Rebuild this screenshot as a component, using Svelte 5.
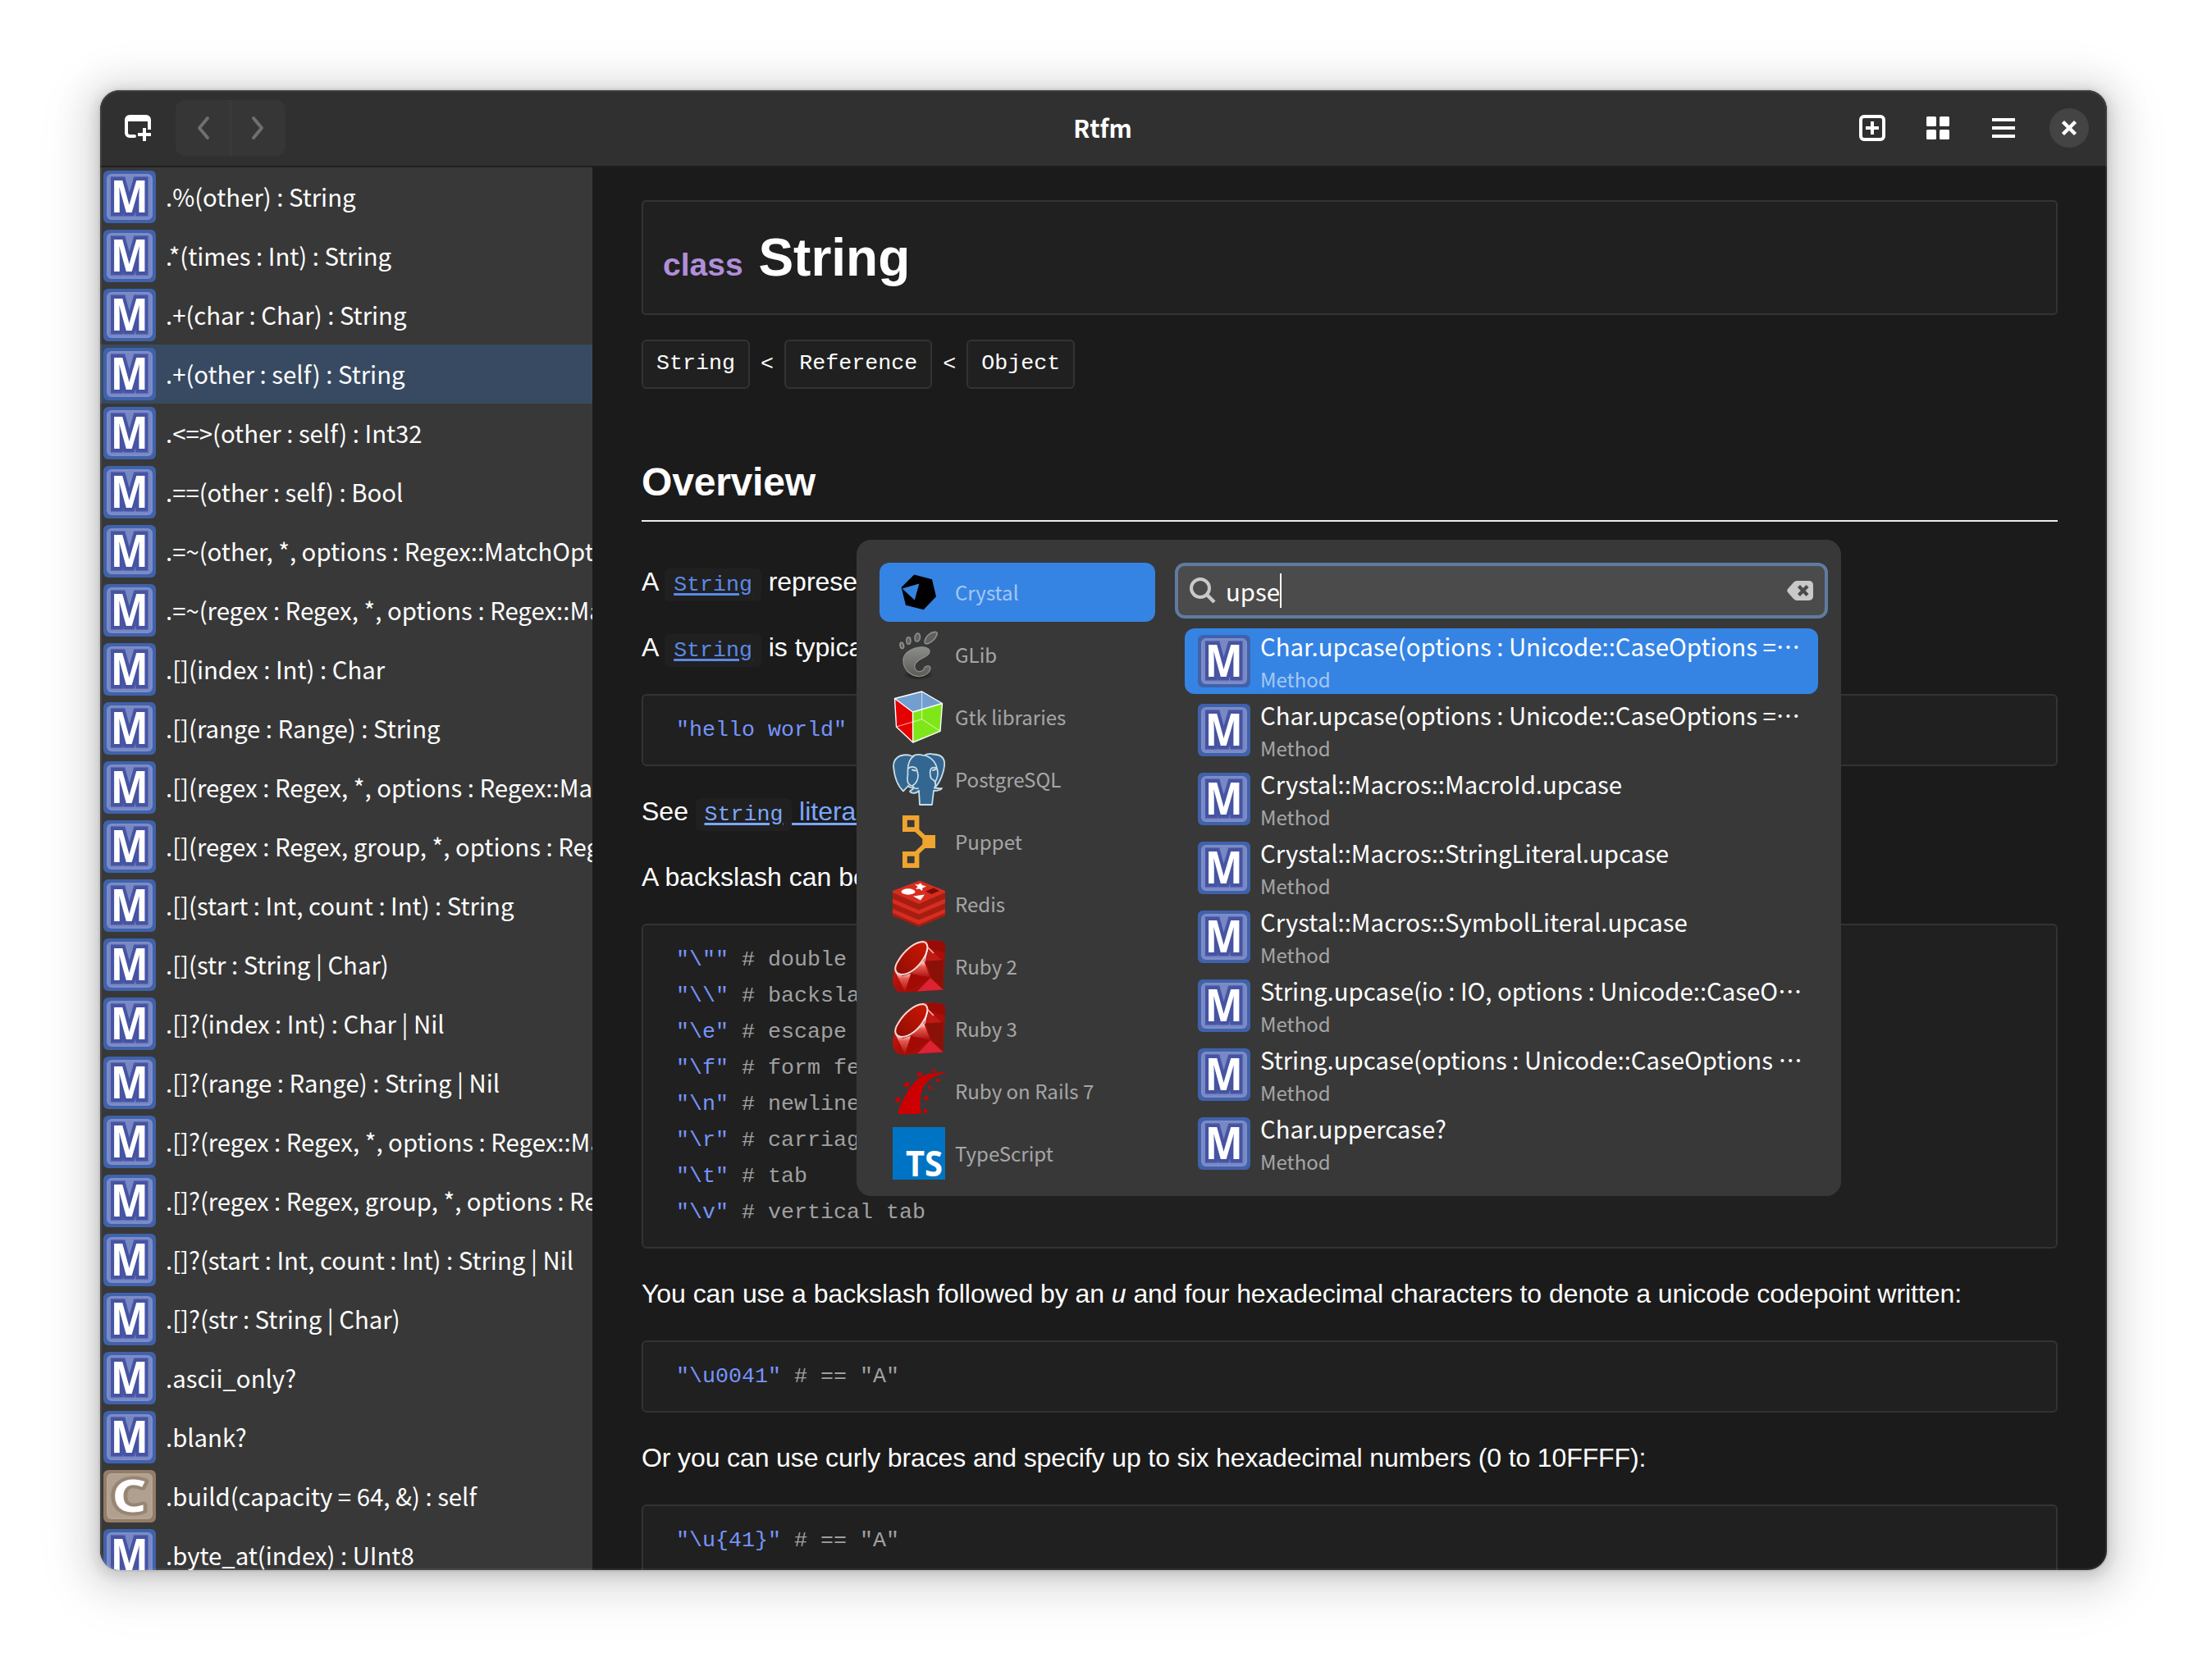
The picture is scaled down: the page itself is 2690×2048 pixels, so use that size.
<script>
  const methods = [
    ['M', '.%(other) : String'],
    ['M', '.*(times : Int) : String'],
    ['M', '.+(char : Char) : String'],
    ['M', '.+(other : self) : String'],
    ['M', '.<=>(other : self) : Int32'],
    ['M', '.==(other : self) : Bool'],
    ['M', '.=~(other, *, options : Regex::MatchOptions'],
    ['M', '.=~(regex : Regex, *, options : Regex::MatchOptions'],
    ['M', '.[](index : Int) : Char'],
    ['M', '.[](range : Range) : String'],
    ['M', '.[](regex : Regex, *, options : Regex::MatchOptions'],
    ['M', '.[](regex : Regex, group, *, options : Regex'],
    ['M', '.[](start : Int, count : Int) : String'],
    ['M', '.[](str : String | Char)'],
    ['M', '.[]?(index : Int) : Char | Nil'],
    ['M', '.[]?(range : Range) : String | Nil'],
    ['M', '.[]?(regex : Regex, *, options : Regex::MatchOptions'],
    ['M', '.[]?(regex : Regex, group, *, options : Regex'],
    ['M', '.[]?(start : Int, count : Int) : String | Nil'],
    ['M', '.[]?(str : String | Char)'],
    ['M', '.ascii_only?'],
    ['M', '.blank?'],
    ['C', '.build(capacity = 64, &) : self'],
    ['M', '.byte_at(index) : UInt8'],
  ];
  const selectedMethod = 3;

  const docsets = ['Crystal', 'GLib', 'Gtk libraries', 'PostgreSQL', 'Puppet', 'Redis', 'Ruby 2', 'Ruby 3', 'Ruby on Rails 7', 'TypeScript'];

  const results = [
    'Char.upcase(options : Unicode::CaseOptions =…',
    'Char.upcase(options : Unicode::CaseOptions =…',
    'Crystal::Macros::MacroId.upcase',
    'Crystal::Macros::StringLiteral.upcase',
    'Crystal::Macros::SymbolLiteral.upcase',
    'String.upcase(io : IO, options : Unicode::CaseO…',
    'String.upcase(options : Unicode::CaseOptions …',
    'Char.uppercase?',
  ];

  const escapes = [
    ['"\\""', 'double quote'],
    ['"\\\\"', 'backslash'],
    ['"\\e"', 'escape'],
    ['"\\f"', 'form feed'],
    ['"\\n"', 'newline'],
    ['"\\r"', 'carriage return'],
    ['"\\t"', 'tab'],
    ['"\\v"', 'vertical tab'],
  ];
  const unicode = '"\\u0041"';
  const unicodeBraces = '"\\u{41}"';
</script>

{#snippet badge(kind)}
  <svg class="badge" class:ctor={kind === 'C'} viewBox="0 0 64 64">
    <rect class="edge" width="64" height="64" rx="6" />
    <rect class="ring" x="4" y="4" width="56" height="56" rx="6" />
    <rect class="face" x="6" y="6" width="52" height="52" rx="4" />
    {#if kind === 'C'}
      <text x="10.500" y="51" textLength="42" lengthAdjust="spacingAndGlyphs">C</text>
    {:else}
      <text x="8.800" y="50.600" textLength="46" lengthAdjust="spacingAndGlyphs">M</text>
    {/if}
  </svg>
{/snippet}

{#snippet logo(name)}
  <svg class="logo" viewBox="0 0 64 64">
    {#if name === 'Crystal'}
      <path fill="#000" fill-rule="evenodd" d="M26.3 10.6 48 16.3 53 37.3 37.7 53.3 16 47.7 10.6 26Z M11.6 27.6 26.8 41.6 32.4 21.4Z" />
    {:else if name === 'GLib'}
      <defs>
        <linearGradient id="foot" x1="0" y1="0" x2="0" y2="1">
          <stop offset="0" stop-color="#8b8d88" /><stop offset="1" stop-color="#5a5c57" />
        </linearGradient>
        <radialGradient id="shade"><stop offset="0" stop-color="#111" /><stop offset="1" stop-color="#111" stop-opacity="0" /></radialGradient>
      </defs>
      <ellipse cx="31" cy="57" rx="19" ry="6" fill="url(#shade)" />
      <g fill="#5f615c" stroke="#8f918c" stroke-width="1.6">
        <path d="M53 4.5C56 5 53 11 50 14C46 18 41 20 39.5 18C38 15 41 10 44 7.500C47 5 50 4 53 4.500Z" />
        <ellipse cx="30.200" cy="11" rx="3.200" ry="5" transform="rotate(10 30 11)" />
        <ellipse cx="19.400" cy="15" rx="2.500" ry="4.300" />
        <ellipse cx="11.300" cy="21" rx="2.200" ry="3.700" transform="rotate(-12 11 21)" />
      </g>
      <path fill="url(#foot)" stroke="#8f918c" stroke-width="1.2" d="M45 27C43 22 33 22 26 24.500C17 28 12 33 13 41C14 52 24 59 33 58.500C41 58 46 53 46 47.500C45 45 40 45.500 38.500 48C38 52 34 53.500 30 52C25 49 26 43 31 39.500C36 36 46 33 45 27Z" />
    {:else if name === 'Gtk libraries'}
      <path fill="#729fcf" d="M2.500 9.500 35.700 1 60.500 15.500 24.500 26Z" />
      <path fill="#e40000" d="M2.500 9.500 24.500 26 24.700 63 4.500 44Z" />
      <path fill="#7fe719" d="M24.500 26 60.500 15.500 58 49.300 24.700 63Z" />
      <path fill="none" stroke="#fff" stroke-opacity=".7" stroke-width="1" d="M35.700 1V34.700L4.500 44M35.700 34.700 58 49.300" />
      <path fill="none" stroke="#fff" stroke-width="1.400" stroke-linejoin="round" d="M2.500 9.500 35.700 1 60.500 15.500 58 49.300 24.700 63 4.500 44ZL24.500 26 60.500 15.500M24.500 26 24.700 63" />
    {:else if name === 'PostgreSQL'}
      <path fill="#336791" stroke="#c9dde6" stroke-width="1.800" stroke-linejoin="round" d="M20 2.500C8 1 1 7 1 16C2 28 6 40 13 46.500L19 40C20 42 23 42.500 25 42C26 45 21 45 21 47C24 50 29 49 32 46L33 63H48L50 46C54 46 58 46 60 43C57 43 53 43.500 51.500 42C58 36 63 22 63.200 13C63 4 57 1.500 49 1.500C45 0 40 2 38 3C33 1.500 27 2 24 4Z" />
      <path fill="none" stroke="#c9dde6" stroke-width="1.700" stroke-linecap="round" stroke-linejoin="round" d="M26 3.500C19 8 18 17 18.500 26C17 33 18 39 24 40C29 37 31 32 31 27C30 22 30 19 28 18C24 16 21 17 19 19M40 3C50 7 54 15 54.500 22M51 43C54 37 51 33 47 31C45 27 45 20 48 18C51 17 53 17 54.500 20C56 26 55 30 51.500 36M24 40C26 43 29 44 31 43" />
      <path stroke="#c9dde6" stroke-width="2" stroke-linecap="round" d="M24 20.500L28 21.500M49 21L52 20" />
    {:else if name === 'Puppet'}
      <g fill="none" stroke="#efa52f">
        <path stroke-width="5.800" d="M14.900 2.900H29.500V17.100H14.900ZM14.900 46.900H29.500V61.100H14.900Z" />
        <path stroke-width="5.500" d="M28 17 42 30M42 34 28 47" />
      </g>
      <rect x="36.300" y="24" width="15.700" height="16" fill="#efa52f" />
    {:else if name === 'Redis'}
      <path fill="#a41e11" d="M0 16V46.500L32 60 64 46.500V16Z" />
      <path fill="#d82c20" d="M0 16 33 3.500 64 16V18L32 32 0 18ZM0 25.500 32 39.500 64 25.500V31L32 44.500 0 31ZM0 38 32 51.500 64 38V43L32 57 0 43Z" />
      <ellipse cx="19" cy="17" rx="8.500" ry="3.700" fill="#fff" />
      <path fill="#fff" d="M27 8 31 8.500 34 6.500 36 9 41 10.500 36.500 12.500 36 16 32.500 13.500 28 14 30.500 11ZM25 22.500 39 20.500 34 27.500Z" />
      <path fill="#7a0c00" d="M40 16.500 50 12.500 57 16 47.500 20Z" />
    {:else if name === 'Ruby 2' || name === 'Ruby 3'}
      <defs>
        <linearGradient id="gem" x1="0" y1="0" x2="1" y2="1">
          <stop offset="0" stop-color="#d42a20" /><stop offset=".5" stop-color="#b00d08" /><stop offset="1" stop-color="#8f1208" />
        </linearGradient>
        <linearGradient id="facet" x1="0" y1="0" x2="0" y2="1">
          <stop offset="0" stop-color="#fff" /><stop offset=".35" stop-color="#e65a4e" /><stop offset="1" stop-color="#a80d0b" />
        </linearGradient>
        <linearGradient id="table" x1="0" y1="1" x2="1" y2="0">
          <stop offset="0" stop-color="#8d0d04" /><stop offset="1" stop-color="#cf1703" />
        </linearGradient>
      </defs>
      <path fill="url(#gem)" d="M37 0.500H54C61 1 64 6 64 13L61.500 61 14 63.800C5 64 0 59 0 48L2 34C6 18 22 3 37 0.500Z" />
      <path fill="#9a0b06" d="M44 10 64 16V4C60 0 50 0 42 1Z" />
      <path fill="#c01a14" d="M44 10 62 26 41 25Z" />
      <path fill="#8a1108" d="M62 24 61 58 47 46 41 26Z" />
      <path fill="url(#facet)" d="M22 41 38 25 46 46Z" />
      <path fill="#a30a06" d="M22 41 46 46 17 63Z" />
      <path fill="#dd2233" d="M46 46 61.500 60.500 30 62.500Z" />
      <path fill="url(#facet)" d="M3 38 12 44 22 41 15 63Z" />
      <path fill="url(#table)" stroke="#f3dcd8" stroke-width="2" d="M37 2C44 3 44 12 38 22C31 34 20 42 11 42C2 41 1 34 7 25C14 13 27 2 37 2Z" />
      <path stroke="#fff" stroke-width="1.600" d="M43 9 50 16M42 11 39 26" stroke-opacity=".7" />
    {:else if name === 'Ruby on Rails 7'}
      <g fill="#c00">
        <path d="M6.300 60C7.500 54 9.500 48 12.500 43C16 36 19 30 24 24.500C29 18 36 13 44 11C51 9.200 58 9 64 9.200V10.500C50 12 40 20 36 31C33 41 33 50 35 60Z" />
        <path d="M29 11 33 8 36.500 11.500 32.500 15ZM13 24.500 18 20.500 21.500 24 17 28ZM2.500 43 6.500 38.500 10 42.500 7 46.500ZM47 6 50 5.200 53 7.500 49 8.500ZM52 18 56 16.500 58 19.500 54.500 21.500ZM43 24 47 27 48.500 31.500 44 29ZM38 38.500 42 38 44 42.500 39.500 44ZM38 53 41 53.500 43 58 38.500 59Z" />
      </g>
    {:else}
      <rect width="64" height="64" fill="#0074c4" />
      <text class="ts" x="16" y="60" textLength="45" lengthAdjust="spacingAndGlyphs">TS</text>
    {/if}
  </svg>
{/snippet}

<div class="desktop">
  <div class="window">
    <header>
      <div class="side">
        <svg class="icon" viewBox="0 0 32 32">
          <path fill="#fff" d="M6 0H26A6 6 0 0 1 32 6V18H28V8H4V22A2 2 0 0 0 6 24H12A2 2 0 0 1 12 28H6A6 6 0 0 1 0 22V6A6 6 0 0 1 6 0Z" />
          <path fill="#fff" d="M22 16H26V22H32V26H26V32H22V26H16V22H22Z" />
        </svg>
        <div class="linked">
          <button aria-label="Back"><svg class="icon" viewBox="0 0 32 32"><path class="chevron" d="M22 4 12 16 22 28" /></svg></button>
          <button aria-label="Forward"><svg class="icon" viewBox="0 0 32 32"><path class="chevron" d="M10 4 20 16 10 28" /></svg></button>
        </div>
      </div>
      <h1>Rtfm</h1>
      <div class="side end">
        <svg class="icon" viewBox="0 0 32 32">
          <rect x="2" y="2" width="28" height="28" rx="4" fill="none" stroke="#fff" stroke-width="4" />
          <path fill="#fff" d="M14 8H18V14H24V18H18V24H14V18H8V14H14Z" />
        </svg>
        <svg class="icon" viewBox="0 0 32 32" fill="#fff">
          <rect x="2" y="2" width="12" height="12" rx="1.500" /><rect x="18" y="2" width="12" height="12" rx="1.500" />
          <rect x="2" y="18" width="12" height="12" rx="1.500" /><rect x="18" y="18" width="12" height="12" rx="1.500" />
        </svg>
        <svg class="icon" viewBox="0 0 32 32"><path fill="#fff" d="M2 4H30V8H2ZM2 14H30V18H2ZM2 24H30V28H2Z" /></svg>
        <button class="close" aria-label="Close"><svg class="icon" viewBox="0 0 32 32"><path d="M10 10 22 22M22 10 10 22" stroke="#fff" stroke-width="4.400" stroke-linecap="square" /></svg></button>
      </div>
    </header>

    <div class="body">
      <aside>
        {#each methods as [kind, label], i}
          <div class="method" class:selected={i === selectedMethod}>{@render badge(kind)}<span>{label}</span></div>
        {/each}
      </aside>

      <main>
        <div class="type-name"><span class="kind">class</span> String</div>
        <div class="ancestors"><code>String</code><i>&lt;</i><code>Reference</code><i>&lt;</i><code>Object</code></div>
        <h2>Overview</h2>
        <div class="prose">
          <p>A <a class="ref" href="#string"><code>String</code></a> represents an immutable sequence of UTF-8 characters.</p>
          <p>A <a class="ref" href="#string"><code>String</code></a> is typically created with a string literal:</p>
          <pre><b>"hello world"</b></pre>
          <p>See <a href="#literals"><code>String</code> literals</a> in the language reference.</p>
          <p>A backslash can be used to denote some characters inside the string:</p>
          <pre>{#each escapes as [code, note]}<b>{code}</b>{` # ${note}\n`}{/each}</pre>
          <p class="snug">You can use a backslash followed by an <em>u</em> and four hexadecimal characters to denote a unicode codepoint written:</p>
          <pre><b>{unicode}</b> # == "A"</pre>
          <p class="tight">Or you can use curly braces and specify up to six hexadecimal numbers (0 to 10FFFF):</p>
          <pre><b>{unicodeBraces}</b> # == "A"</pre>
        </div>
      </main>
    </div>

    <section class="popover">
      <div class="docsets">
        {#each docsets as name, i}
          <div class="docset" class:active={i === 0}>{@render logo(name)}<span>{name}</span></div>
        {/each}
      </div>
      <div class="finder">
        <div class="search">
          <svg class="icon" viewBox="0 0 32 32"><circle cx="13" cy="13" r="11" fill="none" stroke="#c9c9c9" stroke-width="4" /><path stroke="#c9c9c9" stroke-width="4.400" d="M20.500 20.500 30 30" /></svg>
          <span class="query">upse</span><span class="caret"></span>
          <svg class="icon clear" viewBox="0 0 32 32"><path fill="#c9c9c9" d="M12 4H27A5 5 0 0 1 32 9V23A5 5 0 0 1 27 28H12Q10 28 8 26L1 18Q-.5 16 1 14L8 6Q10 4 12 4Z" /><path stroke="#4b4b4b" stroke-width="4.200" d="M14.500 10.500 25 21.500M25 10.500 14.500 21.500" /></svg>
        </div>
        <div class="results">
          {#each results as title, i}
            <div class="result" class:active={i === 0}>
              {@render badge('M')}
              <div class="labels"><span lang="ja">{title}</span><small>Method</small></div>
            </div>
          {/each}
        </div>
      </div>
    </section>
  </div>
</div>

<style>
  :global(body) {
    margin: 0;
    background: #fff;
  }
  .desktop {
    box-sizing: border-box;
    height: 2048px;
    padding: 110px 0 0 122px;
    overflow: hidden;
  }
  .window {
    position: relative;
    width: 2446px;
    height: 1804px;
    display: flex;
    flex-direction: column;
    overflow: hidden;
    border-radius: 24px;
    background: #1b1b1b;
    color: #fff;
    font: 29.33px/44px 'Noto Sans CJK JP', sans-serif;
    box-shadow:
      0 4px 16px 4px rgba(0, 0, 0, 0.13),
      0 6px 40px 20px rgba(0, 0, 0, 0.09),
      0 12px 64px 32px rgba(0, 0, 0, 0.04),
      0 0 0 2px rgba(0, 0, 0, 0.05);
  }
  .window::after {
    content: '';
    position: absolute;
    inset: 0;
    border-radius: 24px;
    box-shadow: inset 0 0 0 2px rgba(255, 255, 255, 0.07);
    pointer-events: none;
  }
  button {
    display: grid;
    place-items: center;
    padding: 0;
    border: 0;
    color: inherit;
  }
  .icon {
    display: block;
    flex: none;
    width: 32px;
    height: 32px;
  }

  header {
    flex: none;
    height: 92px;
    display: grid;
    grid-template-columns: 1fr auto 1fr;
    align-items: center;
    border-bottom: 2px solid #1f1f1f;
    background: #303030;
  }
  .side {
    display: flex;
    align-items: center;
    gap: 30px;
    padding-left: 30px;
  }
  .side.end {
    justify-content: flex-end;
    gap: 48px;
    padding: 0 22px 0 0;
  }
  .linked {
    display: flex;
    gap: 2px;
    overflow: hidden;
    border-radius: 12px;
    background: #3b3b3b;
  }
  .linked button {
    width: 66px;
    height: 68px;
    background: #363636;
  }
  .chevron {
    fill: none;
    stroke: #6f6f6f;
    stroke-width: 4;
    stroke-linecap: round;
    stroke-linejoin: round;
  }
  .close {
    width: 48px;
    height: 48px;
    margin-left: -8px;
    border-radius: 50%;
    background: #444;
  }
  h1 {
    margin: 0;
    padding: 0 2px 2px 0;
    font-size: 29.33px;
    font-weight: 700;
  }

  .body {
    flex: 1;
    min-height: 0;
    display: flex;
  }
  aside {
    flex: none;
    width: 600px;
    overflow: hidden;
    background: #383838;
  }
  .method {
    height: 72px;
    padding-left: 4px;
    display: flex;
    align-items: center;
    gap: 12px;
    white-space: pre;
  }
  .method span {
    padding-bottom: 2px;
  }
  .method.selected {
    background: #374a61;
  }
  .badge,
  .logo {
    display: block;
    flex: none;
    width: 64px;
    height: 64px;
  }
  .edge { fill: #4062ab; }
  .ring { fill: #7e8dc8; }
  .face { fill: #7888c4; }
  .badge text {
    font: 700 53px 'Noto Sans', sans-serif;
    fill: #fff;
    stroke: #4654a3;
    stroke-width: 9px;
    paint-order: stroke;
  }
  .ctor .edge { fill: #947c67; }
  .ctor .ring { fill: #b5a594; }
  .ctor .face { fill: #b0a08f; }
  .ctor text {
    font-size: 54px;
    stroke: #988672;
    stroke-width: 8px;
    stroke-linejoin: round;
  }
  .ts {
    font: 700 43px 'Noto Sans', sans-serif;
    fill: #fff;
  }

  main {
    flex: 1;
    min-width: 0;
    overflow: hidden;
    padding: 40px 60px 0;
    font: 32px/48px 'Liberation Sans', sans-serif;
  }
  code,
  pre,
  .ancestors {
    font-family: 'Liberation Mono', monospace;
    font-size: 26.67px;
  }
  .type-name {
    box-sizing: border-box;
    height: 140px;
    padding: 32px 24px;
    border: 2px solid #333;
    border-radius: 5px;
    background: #202020;
    font-size: 64px;
    font-weight: 700;
    line-height: 72px;
  }
  .kind {
    margin-right: 1px;
    font-size: 39px;
    color: #b08fd8;
  }
  .ancestors {
    display: flex;
    align-items: center;
    margin-top: 30px;
  }
  .ancestors code {
    height: 56px;
    padding: 0 16px;
    border: 2px solid #333;
    border-radius: 6px;
    background: #202020;
    line-height: 54px;
  }
  .ancestors i {
    width: 42.200px;
    text-align: center;
    font-style: normal;
    line-height: 54px;
  }
  h2 {
    margin: 86px 0 0;
    padding-bottom: 18px;
    border-bottom: 2px solid #ececec;
    font-size: 48px;
    letter-spacing: -0.2px;
    line-height: 56px;
  }
  .prose {
    display: flex;
    flex-direction: column;
    gap: 32px;
    margin-top: 50px;
  }
  p {
    margin: -1px 0 1px;
    height: 48px;
    white-space: nowrap;
  }
  .snug {
    letter-spacing: -0.062px;
  }
  .tight {
    letter-spacing: -0.12px;
  }
  p code {
    padding: 5px 10.67px;
    border-radius: 6px;
    background: #202020;
  }
  a {
    color: #7ba7fb;
    text-underline-offset: 3px;
  }
  a.ref {
    color: #5b89e6;
  }
  pre {
    box-sizing: border-box;
    margin: 0;
    padding: 20px 40px;
    border: 2px solid #333;
    border-radius: 6px;
    background: #202020;
    color: #a0a0a0;
    line-height: 44px;
  }
  pre b {
    font-weight: 400;
    color: #7594fa;
  }

  .popover {
    position: absolute;
    left: 922px;
    top: 548px;
    box-sizing: border-box;
    width: 1200px;
    height: 800px;
    padding: 28px 16px 0 28px;
    display: flex;
    gap: 24px;
    border-radius: 18px;
    background: #383838;
  }
  .docsets {
    width: 336px;
    display: flex;
    flex-direction: column;
    gap: 4px;
  }
  .docset {
    height: 72px;
    padding-left: 16px;
    display: flex;
    align-items: center;
    gap: 12px;
    border-radius: 12px;
    font-size: 24.050px;
  }
  .docset span,
  small {
    opacity: 0.55;
  }
  .docset.active,
  .result.active {
    background: #3584e4;
  }
  .finder {
    width: 796px;
  }
  .search {
    box-sizing: border-box;
    height: 68px;
    padding: 0 14px;
    display: flex;
    align-items: center;
    border: 4px solid #5f7c9f;
    border-radius: 12px;
    background: #4b4b4b;
  }
  .query {
    margin-left: 12px;
    padding-bottom: 1px;
  }
  .caret {
    width: 2px;
    height: 42px;
    background: #fff;
  }
  .clear {
    margin-left: auto;
  }
  .results {
    margin: 12px 12px 0;
    display: flex;
    flex-direction: column;
    gap: 4px;
  }
  .result {
    height: 80px;
    padding-left: 16px;
    display: flex;
    align-items: center;
    gap: 12px;
    border-radius: 12px;
  }
  .labels {
    display: flex;
    flex-direction: column;
    white-space: pre;
    line-height: 40px;
  }
  small {
    margin: 2px 0 -2px;
    font-size: 24.050px;
    line-height: 38px;
  }
</style>
